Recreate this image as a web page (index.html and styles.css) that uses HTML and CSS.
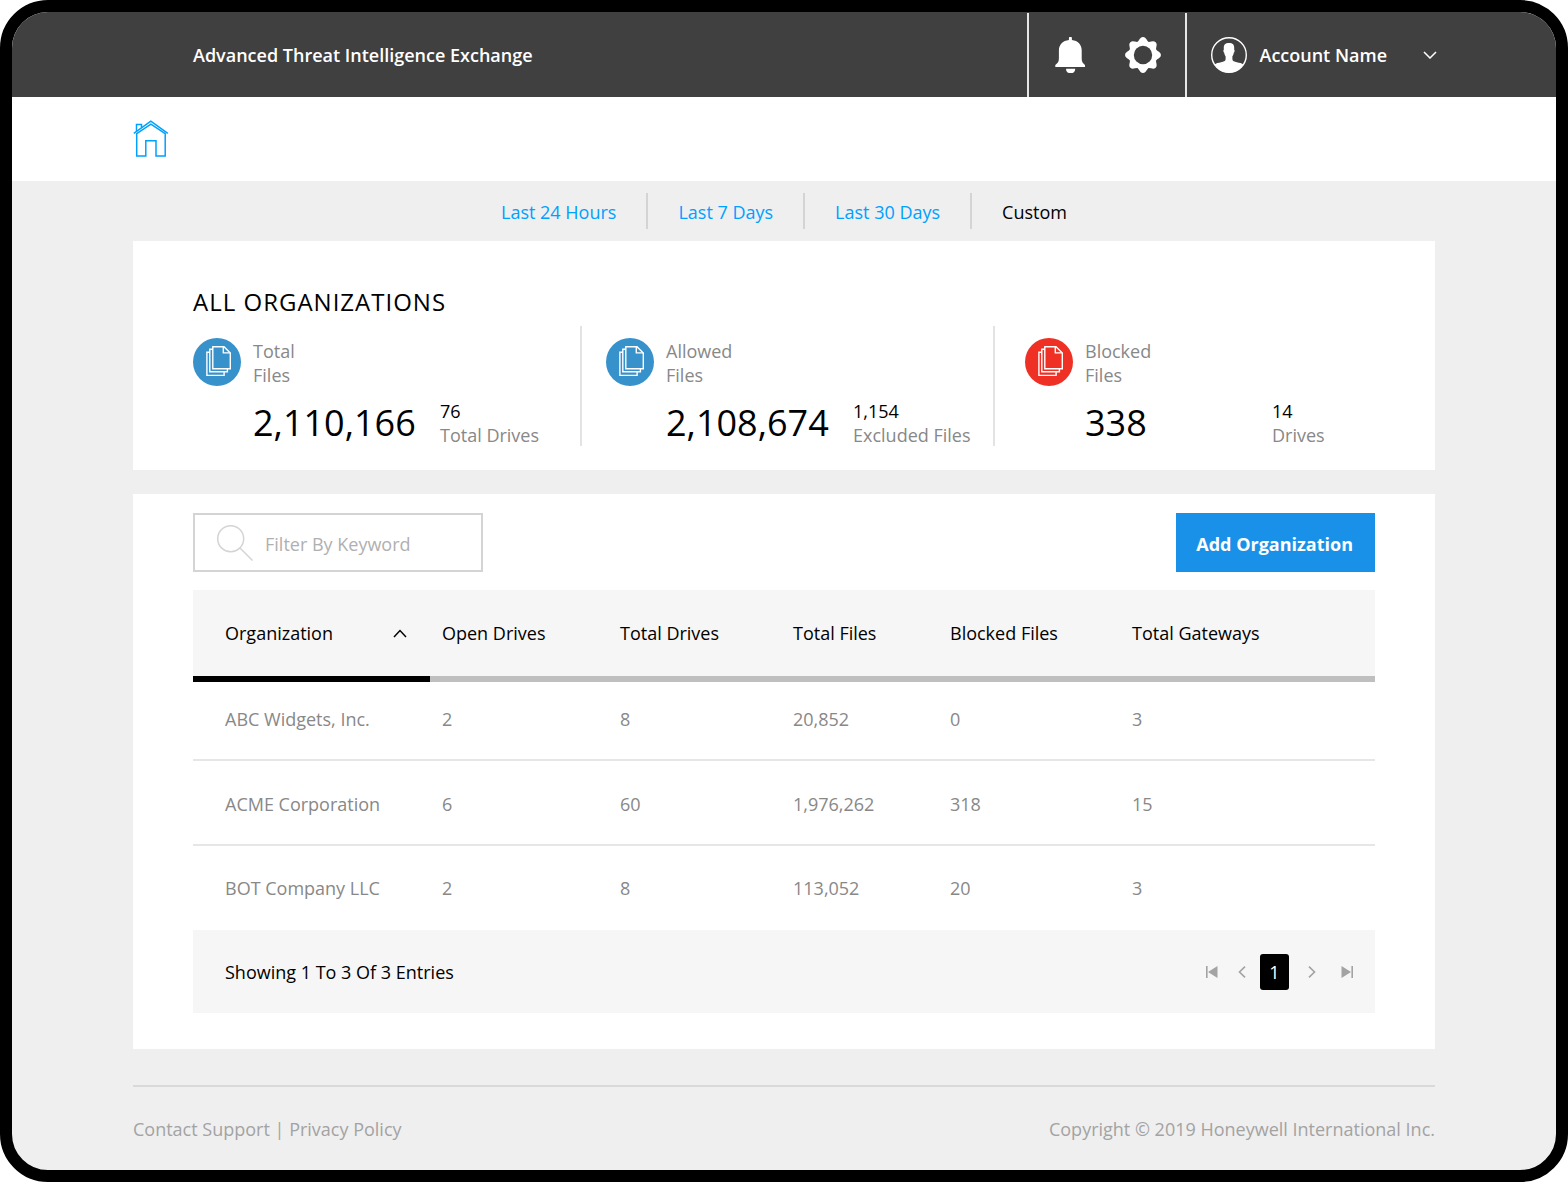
FILE: index.html
```html
<!DOCTYPE html>
<html lang="en">
<head>
  <meta charset="UTF-8" />
  <meta name="viewport" content="width=device-width, initial-scale=1" />
  <title>Advanced Threat Intelligence Exchange</title>
  <link rel="stylesheet" href="styles.css">
</head>
<body>
  <svg class="sprite" aria-hidden="true">
    <symbol id="files" viewBox="0 0 48 48">
      <g fill="none" stroke="currentColor" stroke-width="1.4">
        <path d="M19.8 8.7h11.2l6.3 6.3v15.8H19.8z" />
        <path d="M30.3 8.7v6.2h7" />
        <path d="M19.8 11.3h-3v22.4h17.6v-2.9" />
        <path d="M16.8 14.2h-2.9v23.2h17.2v-3.7" />
      </g>
    </symbol>
  </svg>

  <div class="screen">
    <header class="topbar">
      <h1 class="brand">Advanced Threat Intelligence Exchange</h1>
      <div class="tools">
        <button class="icon-button" type="button" aria-label="Notifications">
          <svg width="36" height="36" viewBox="0 0 36 36" fill="#fff">
            <path d="M16.9 3V1.2a1.5 1.5 0 0 1 3 0V3c6 .7 9.8 4.4 9.8 10.5v8c0 3 .8 4.6 3.3 6.5v1.9H3.3V28c2.6-1.900 3.600-3.500 3.600-6.500v-8C6.900 7.400 10.900 3.700 16.900 3z" />
            <path d="M14 31.700h9.200c0 2.900-1.900 4.600-4.600 4.600S14 34.600 14 31.700z" />
          </svg>
        </button>
        <button class="icon-button" type="button" aria-label="Settings">
          <svg width="36" height="36" viewBox="0 0 36 36">
            <g fill="#fff">
              <circle cx="18" cy="18" r="14" />
              <path id="tooth" d="M11.5 5.5C14.5 4.5 14.4.1 18 .1s3.500 4.400 6.500 5.400z" />
              <use href="#tooth" transform="rotate(45 18 18)" />
              <use href="#tooth" transform="rotate(90 18 18)" />
              <use href="#tooth" transform="rotate(135 18 18)" />
              <use href="#tooth" transform="rotate(180 18 18)" />
              <use href="#tooth" transform="rotate(225 18 18)" />
              <use href="#tooth" transform="rotate(270 18 18)" />
              <use href="#tooth" transform="rotate(315 18 18)" />
            </g>
            <circle cx="18" cy="18" r="9.2" fill="#404040" />
          </svg>
        </button>
      </div>
      <button class="account" type="button">
        <svg width="36" height="36" viewBox="0 0 36 36">
          <circle cx="18" cy="18" r="17.3" fill="none" stroke="#fff" stroke-width="1.4" />
          <path fill="#fff" d="M18 6c3.700 0 5.400 1.700 5.200 5.300v1.500c.8.200.3 2.700-.4 2.900-.3 1.900-.9 2.900-1.400 3.600v3c0 3.600 8.300 2.700 11 5.200A17.300 17.300 0 0 1 18 35.700 17.300 17.300 0 0 1 3.600 27.500c2.700-2.500 11-1.600 11-5.200v-3c-.5-.7-1.100-1.700-1.400-3.600-.7-.2-1.200-2.700-.4-2.900v-1.500C12.600 7.700 14.300 6 18 6z" />
        </svg>
        <span class="account-name">Account Name</span>
        <svg width="14" height="8" viewBox="0 0 14 8">
          <path d="M1 1l6 6 6-6" fill="none" stroke="#fff" stroke-width="1.5" />
        </svg>
      </button>
    </header>

    <nav class="crumbs" aria-label="Main">
      <a href="#" aria-label="Home">
        <svg width="36" height="38" viewBox="0 0 36 38" fill="none" stroke="#00a0ff" stroke-width="1.5">
          <path d="M.8 13.3L17.8 1.200l17 12.100" />
          <path d="M3.700 13.700v22.400h9.100V20.700H23v15.400h9.200V13.700L17.900 4.200z" />
          <path d="M3.500 11V4.500h5v3" />
        </svg>
      </a>
    </nav>

    <main class="content">
      <nav class="ranges" aria-label="Date range">
        <a href="#">Last 24 Hours</a>
        <a href="#">Last 7 Days</a>
        <a href="#">Last 30 Days</a>
        <a href="#" class="current">Custom</a>
      </nav>

      <section class="card summary">
        <h2>ALL ORGANIZATIONS</h2>
        <div class="stats">
          <div class="stat">
            <svg class="badge"><use href="#files" /></svg>
            <div class="stat-label">Total<br />Files</div>
            <div class="stat-value">2,110,166</div>
            <div class="stat-extra"><b>76</b>Total Drives</div>
          </div>
          <div class="stat">
            <svg class="badge"><use href="#files" /></svg>
            <div class="stat-label">Allowed<br />Files</div>
            <div class="stat-value">2,108,674</div>
            <div class="stat-extra"><b>1,154</b>Excluded Files</div>
          </div>
          <div class="stat">
            <svg class="badge blocked"><use href="#files" /></svg>
            <div class="stat-label">Blocked<br />Files</div>
            <div class="stat-value">338</div>
            <div class="stat-extra"><b>14</b>Drives</div>
          </div>
        </div>
      </section>

      <section class="card organizations">
        <div class="toolbar">
          <label class="filter">
            <svg width="36" height="36" viewBox="0 0 36 36" fill="none" stroke="#d4d4d4" stroke-width="1.5">
              <circle cx="13.7" cy="13.7" r="13" />
              <path d="M23 23l12.500 12.500" />
            </svg>
            <input type="text" placeholder="Filter By Keyword" aria-label="Filter By Keyword" />
          </label>
          <button class="add" type="button">Add Organization</button>
        </div>

        <table>
          <colgroup>
            <col class="col-org" />
            <col class="col-open" />
            <col class="col-drives" />
            <col class="col-files" />
            <col class="col-blocked" />
            <col class="col-gateways" />
          </colgroup>
          <thead>
            <tr>
              <th class="sorted" aria-sort="ascending">
                <button class="sort" type="button">
                  Organization
                  <svg width="14" height="9" viewBox="0 0 14 9">
                    <path d="M1 8l6-6.500L13 8" fill="none" stroke="#000" stroke-width="1.5" />
                  </svg>
                </button>
              </th>
              <th>Open Drives</th>
              <th>Total Drives</th>
              <th>Total Files</th>
              <th>Blocked Files</th>
              <th>Total Gateways</th>
            </tr>
          </thead>
          <tbody>
            <tr><td>ABC Widgets, Inc.</td><td>2</td><td>8</td><td>20,852</td><td>0</td><td>3</td></tr>
            <tr><td>ACME Corporation</td><td>6</td><td>60</td><td>1,976,262</td><td>318</td><td>15</td></tr>
            <tr><td>BOT Company LLC</td><td>2</td><td>8</td><td>113,052</td><td>20</td><td>3</td></tr>
          </tbody>
        </table>

        <div class="table-footer">
          <span>Showing 1 To 3 Of 3 Entries</span>
          <div class="pager">
            <button type="button" aria-label="First page">
              <svg width="12" height="12" viewBox="0 0 12 12"><path d="M0 0h1.600v12H0zM11.500 0v12L2 6z" fill="#a3a3a3" /></svg>
            </button>
            <button type="button" aria-label="Previous page">
              <svg width="8" height="12" viewBox="0 0 8 12"><path d="M7 .7L1.500 6 7 11.300" fill="none" stroke="#a3a3a3" stroke-width="1.6" /></svg>
            </button>
            <button class="page" type="button" aria-current="page">1</button>
            <button class="forward" type="button" aria-label="Next page">
              <svg width="8" height="12" viewBox="0 0 8 12"><path d="M1 .7L6.500 6 1 11.300" fill="none" stroke="#a3a3a3" stroke-width="1.6" /></svg>
            </button>
            <button class="forward" type="button" aria-label="Last page">
              <svg width="12" height="12" viewBox="0 0 12 12"><path d="M10.400 0H12v12h-1.600zM.5 0v12L10 6z" fill="#a3a3a3" /></svg>
            </button>
          </div>
        </div>
      </section>

      <footer class="footer">
        <div><a href="#">Contact Support</a> | <a href="#">Privacy Policy</a></div>
        <div>Copyright © 2019 Honeywell International Inc.</div>
      </footer>
    </main>
  </div>
</body>
</html>
```
FILE: styles.css
```css
* { box-sizing: border-box; }
body {
  margin: 0;
  background: #fff;
  color: #000;
  font-family: "Open Sans", "Noto Sans", sans-serif;
  font-size: 18px;
  line-height: 24px;
}
a { color: inherit; text-decoration: none; }
button {
  padding: 0;
  border: none;
  background: none;
  color: inherit;
  font: inherit;
  cursor: pointer;
}
svg { display: block; flex: none; }
.sprite { position: absolute; width: 0; height: 0; }

.screen {
  min-height: 100vh;
  border: 12px solid #000;
  border-radius: 48px;
  background: #efefef;
  overflow: hidden;
}

/* top bar */
.topbar {
  display: flex;
  height: 85px;
  padding: 1px 119px 0 181px;
  background: #404040;
  color: #fff;
  font-weight: 600;
}
.brand {
  flex: 1;
  align-self: center;
  margin: 0;
  font-size: 18px;
  font-weight: 600;
}
.tools {
  display: flex;
  align-items: center;
  gap: 37px;
  padding: 0 24px 0 23px;
  border-left: 2px solid #e6e6e6;
  border-right: 2px solid #e6e6e6;
}
.account {
  display: flex;
  align-items: center;
  gap: 12px;
  padding-left: 24px;
}
.account-name { padding-right: 24px; }

.crumbs {
  display: flex;
  align-items: center;
  height: 84px;
  padding: 0 121px;
  background: #fff;
}

.content { padding: 0 121px; }
.ranges {
  display: flex;
  justify-content: center;
  padding: 12px 0;
  color: #00a0ff;
}
.ranges a { padding: 7px 30px 5px; }
.ranges a + a { border-left: 2px solid #d4d4d4; }
.ranges .current { color: #000; }

.card { background: #fff; }
.card + .card { margin-top: 24px; }

/* totals */
.summary { padding: 45px 60px 24px; }
.summary h2 {
  margin: 0 0 8px;
  font-size: 24px;
  font-weight: 400;
  line-height: 32px;
  letter-spacing: 1px;
}
.stats {
  display: grid;
  grid-template-columns: 389fr 413fr 380fr;
}
.stat {
  display: grid;
  grid-template-columns: 60px 187px auto;
  grid-template-rows: 60px 48px;
  padding: 12px 0 0;
}
.stat + .stat {
  padding-left: 24px;
}
.stat:last-child { padding-left: 30px; }
.stat:not(:last-child) { border-right: 2px solid #e3e3e3; }
.badge {
  width: 48px;
  height: 48px;
  border-radius: 50%;
  background: #3792cb;
  color: #fff;
}
.badge.blocked { background: #ee3124; }
.stat-label {
  grid-column: 2 / 4;
  padding-top: 1px;
  color: #888;
}
.stat-value {
  grid-column: 2;
  padding-top: 1px;
  font-size: 36px;
  line-height: 48px;
}
.stat-extra { padding-top: 1px; color: #888; }
.stat-extra b {
  display: block;
  color: #000;
  font-weight: 400;
}

/* organizations */
.organizations { padding: 19px 60px 36px; }
.toolbar {
  display: flex;
  justify-content: space-between;
  margin-bottom: 18px;
}
.filter {
  display: flex;
  align-items: center;
  gap: 12px;
  width: 290px;
  height: 59px;
  padding: 0 22px;
  border: 2px solid #d4d4d4;
}
.filter input {
  flex: 1;
  min-width: 0;
  padding: 3px 0 0;
  border: none;
  outline: none;
  background: none;
  font: inherit;
}
.filter input::placeholder { color: #b0b0b0; }
.add {
  padding: 3px 22px 0 20px;
  background: #1a91e8;
  color: #fff;
  font-weight: 700;
}

table {
  width: 100%;
  table-layout: fixed;
  border-collapse: separate;
  border-spacing: 0;
}
.col-org { width: 237px; }
.col-open { width: 178px; }
.col-drives { width: 173px; }
.col-files { width: 157px; }
.col-blocked { width: 182px; }
.col-gateways { width: 255px; }
th, td {
  padding: 0 0 0 12px;
  font-weight: 400;
  text-align: left;
}
th:first-child, td:first-child { padding-left: 32px; }
th {
  height: 86px;
  background: #f6f6f6;
  box-shadow: 0 6px 0 #bfbfbf;
}
th.sorted { box-shadow: 0 6px 0 #000; }
.sort {
  display: flex;
  align-items: center;
  justify-content: space-between;
  width: 100%;
  padding-right: 23px;
}
td {
  height: 85px;
  padding-top: 2px;
  border-bottom: 2px solid #e6e6e6;
  color: #888;
}
tr:last-child td {
  height: 84px;
  padding-top: 0;
  border-bottom: none;
}

.table-footer {
  display: flex;
  align-items: center;
  justify-content: space-between;
  height: 83px;
  padding: 0 16px 0 32px;
  background: #f6f6f6;
}
.pager {
  display: flex;
  align-items: center;
  gap: 6px;
}
.pager button {
  display: flex;
  align-items: center;
  justify-content: center;
  width: 24px;
  height: 36px;
}
.pager .page {
  width: 29px;
  border-radius: 3px;
  background: #000;
  color: #fff;
}
.pager .forward { margin-left: 5px; }

.footer {
  display: flex;
  justify-content: space-between;
  margin-top: 36px;
  padding: 30px 0 29px;
  border-top: 2px solid #d9d9d9;
  color: #a3a3a3;
}
```
